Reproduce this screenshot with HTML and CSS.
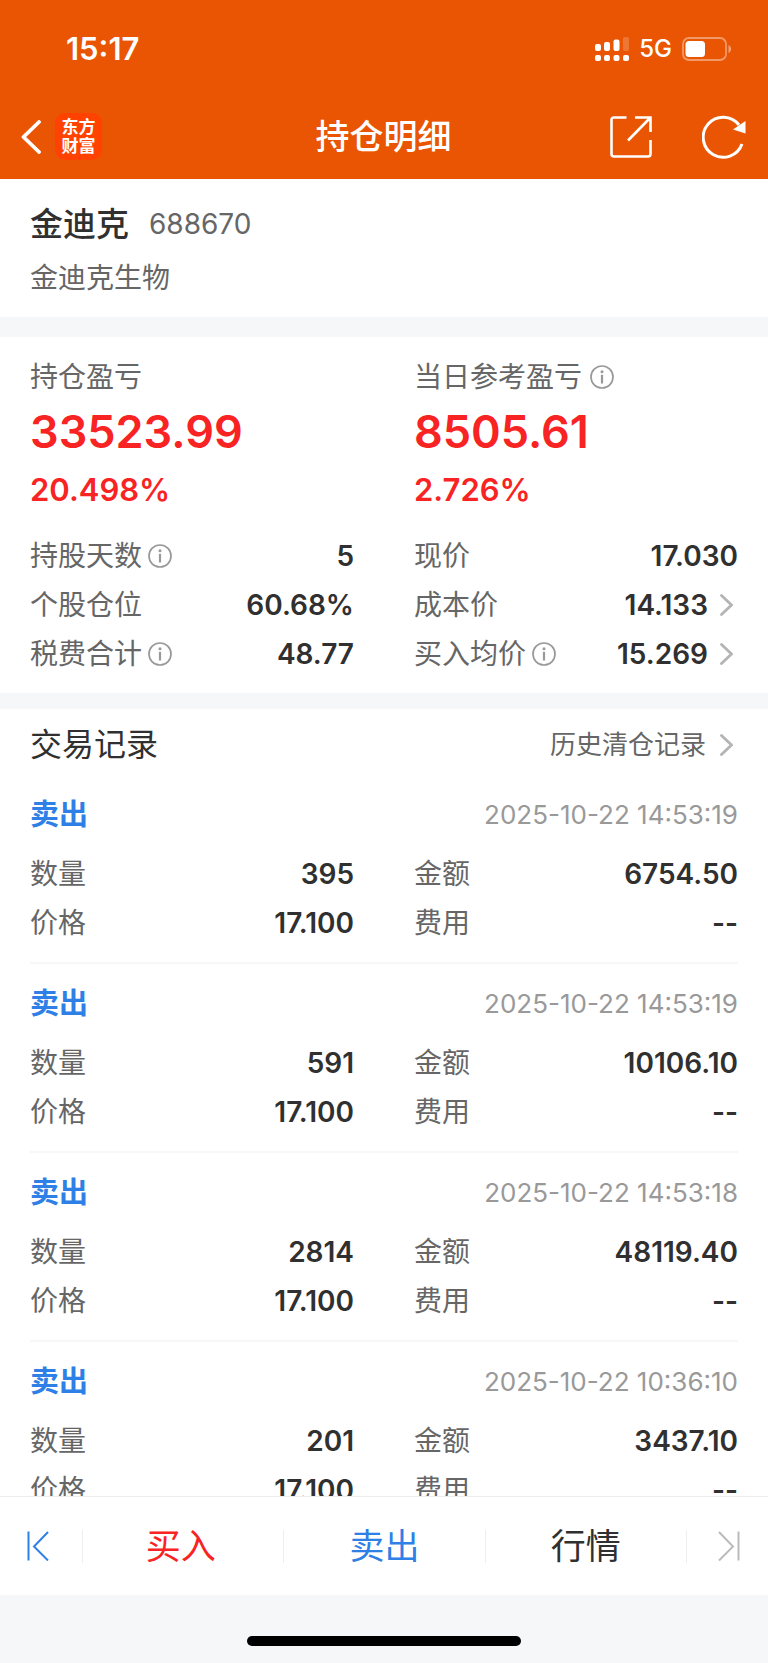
FILE: index.html
```html
<!DOCTYPE html>
<html lang="zh-CN">
<head>
<meta charset="utf-8">
<meta name="viewport" content="width=device-width, initial-scale=1">
<title>持仓明细</title>
<link rel="stylesheet" href="styles.css">
</head>
<body>
<svg class="sprite" aria-hidden="true">
  <symbol id="info" viewBox="0 0 24 24">
    <circle cx="12" cy="12" r="11" fill="none" stroke="currentColor" stroke-width="1.7"/>
    <circle cx="12" cy="6.8" r="1.5" fill="currentColor"/>
    <path d="M12 9.8V18.5" stroke="currentColor" stroke-width="2.2"/>
  </symbol>
  <symbol id="chevron" viewBox="0 0 13 22">
    <path d="M1.5 1.5L11.5 11L1.5 20.5" fill="none" stroke="currentColor" stroke-width="2.8" stroke-linecap="round"/>
  </symbol>
</svg>
<div class="app">
  <header class="header">
    <div class="status">
      <time class="clock">15:17</time>
      <svg class="signal" viewBox="0 0 34 25" aria-label="信号">
        <g fill="#fff">
          <rect x="0" y="7" width="6" height="7" rx="2"/><rect x="9" y="5" width="6" height="9" rx="2"/><rect x="18.500" y="2.500" width="6" height="11.500" rx="2"/>
          <rect x="0" y="18" width="6" height="6" rx="2"/><rect x="9" y="18" width="6" height="6" rx="2"/><rect x="18.500" y="18" width="6" height="6" rx="2"/><rect x="28" y="18" width="6" height="6" rx="2"/>
        </g>
        <rect x="28" y="0" width="6" height="14" rx="2" fill="#fff" opacity=".2"/>
      </svg>
      <span class="network">5G</span>
      <svg class="battery" viewBox="0 0 50 24" aria-label="电量">
        <rect x="1" y="1" width="43" height="22" rx="6" fill="none" stroke="#fff" stroke-opacity=".4" stroke-width="1.8"/>
        <rect x="3.500" y="4" width="19.500" height="16" rx="3.500" fill="#fff"/>
        <path d="M46.500 8V16C50 14.500 50 9.500 46.500 8Z" fill="#fff" opacity=".45"/>
      </svg>
    </div>
    <nav class="nav">
      <div class="nav-side">
        <button class="icon-button" type="button" aria-label="返回">
          <svg class="back" viewBox="0 0 20 34"><path d="M18 2L2.500 17L18 32" fill="none" stroke="#fff" stroke-width="3.800" stroke-linecap="round" stroke-linejoin="round"/></svg>
        </button>
        <div class="logo"><span>东方</span><span>财富</span></div>
      </div>
      <h1 class="title">持仓明细</h1>
      <div class="nav-side nav-end">
        <button class="icon-button" type="button" aria-label="分享">
          <svg class="share" viewBox="0 0 42 42" fill="none" stroke="#fff" stroke-width="2.600">
            <path d="M16.500 1.500H4Q1.500 1.500 1.500 4V38Q1.500 40.500 4 40.500H38Q40.500 40.500 40.500 38V24"/>
            <path d="M25 1.500H40.500V16M40 2L18 24.500"/>
          </svg>
        </button>
        <button class="icon-button" type="button" aria-label="刷新">
          <svg class="refresh" viewBox="0 0 44 44">
            <path d="M40 29A20 20 0 1 1 37 10" fill="none" stroke="#fff" stroke-width="3"/>
            <path d="M43.500 6V18.500L31 14.500Z" fill="#fff"/>
          </svg>
        </button>
      </div>
    </nav>
  </header>

  <main class="content">
    <section class="stock">
      <div class="stock-head"><h2 class="stock-name">金迪克</h2><span class="stock-code">688670</span></div>
      <p class="stock-full">金迪克生物</p>
    </section>

    <section class="holding">
      <div class="columns">
        <div>
          <p class="label">持仓盈亏</p>
          <p class="profit">33523.99</p>
          <p class="percent">20.498%</p>
        </div>
        <div>
          <p class="label">当日参考盈亏<svg class="info"><use href="#info"/></svg></p>
          <p class="profit">8505.61</p>
          <p class="percent">2.726%</p>
        </div>
      </div>
      <dl class="columns facts">
        <div class="row"><dt>持股天数<svg class="info"><use href="#info"/></svg></dt><dd>5</dd></div>
        <div class="row"><dt>现价</dt><dd>17.030</dd></div>
        <div class="row"><dt>个股仓位</dt><dd>60.68%</dd></div>
        <div class="row"><dt>成本价</dt><dd>14.133<svg class="chevron"><use href="#chevron"/></svg></dd></div>
        <div class="row"><dt>税费合计<svg class="info"><use href="#info"/></svg></dt><dd>48.77</dd></div>
        <div class="row"><dt>买入均价<svg class="info"><use href="#info"/></svg></dt><dd>15.269<svg class="chevron"><use href="#chevron"/></svg></dd></div>
      </dl>
    </section>

    <section class="trades">
      <div class="trades-head">
        <h2 class="trades-title">交易记录</h2>
        <a class="history" href="#">历史清仓记录<svg class="chevron"><use href="#chevron"/></svg></a>
      </div>
      <article class="trade">
        <div class="trade-head"><h3 class="side">卖出</h3><time class="date">2025-10-22 14:53:19</time></div>
        <dl class="columns">
          <div class="row"><dt>数量</dt><dd>395</dd></div><div class="row"><dt>金额</dt><dd>6754.50</dd></div>
          <div class="row"><dt>价格</dt><dd>17.100</dd></div><div class="row"><dt>费用</dt><dd>--</dd></div>
        </dl>
      </article>
      <article class="trade">
        <div class="trade-head"><h3 class="side">卖出</h3><time class="date">2025-10-22 14:53:19</time></div>
        <dl class="columns">
          <div class="row"><dt>数量</dt><dd>591</dd></div><div class="row"><dt>金额</dt><dd>10106.10</dd></div>
          <div class="row"><dt>价格</dt><dd>17.100</dd></div><div class="row"><dt>费用</dt><dd>--</dd></div>
        </dl>
      </article>
      <article class="trade">
        <div class="trade-head"><h3 class="side">卖出</h3><time class="date">2025-10-22 14:53:18</time></div>
        <dl class="columns">
          <div class="row"><dt>数量</dt><dd>2814</dd></div><div class="row"><dt>金额</dt><dd>48119.40</dd></div>
          <div class="row"><dt>价格</dt><dd>17.100</dd></div><div class="row"><dt>费用</dt><dd>--</dd></div>
        </dl>
      </article>
      <article class="trade">
        <div class="trade-head"><h3 class="side">卖出</h3><time class="date">2025-10-22 10:36:10</time></div>
        <dl class="columns">
          <div class="row"><dt>数量</dt><dd>201</dd></div><div class="row"><dt>金额</dt><dd>3437.10</dd></div>
          <div class="row"><dt>价格</dt><dd>17.100</dd></div><div class="row"><dt>费用</dt><dd>--</dd></div>
        </dl>
      </article>
    </section>
  </main>

  <footer>
    <div class="actions">
      <button class="action step first" type="button" aria-label="上一只"><svg class="step-icon" viewBox="0 0 22 30" fill="none" stroke="currentColor" stroke-width="2"><path d="M1.500 0.500V29.500M21 1L7 15.500L21 29.500"/></svg></button>
      <button class="action buy" type="button">买入</button>
      <button class="action sell" type="button">卖出</button>
      <button class="action quote" type="button">行情</button>
      <button class="action step last" type="button" aria-label="下一只"><svg class="step-icon" viewBox="0 0 22 30" fill="none" stroke="currentColor" stroke-width="2"><path d="M20.500 0.500V29.500M1 1L15 15.500L1 29.500"/></svg></button>
    </div>
    <div class="home"><div class="home-bar"></div></div>
  </footer>
</div>
</body>
</html>
```
FILE: styles.css
```css
* {
  box-sizing: border-box;
}

body,
h1,
h2,
h3,
p,
dl,
dd {
  margin: 0;
}

body {
  font-family: Inter, "Noto Sans CJK SC", sans-serif;
  font-size: 28px;
  line-height: 48px;
  color: #666;
  background: #f6f7f9;
}

button {
  padding: 0;
  border: 0;
  background: none;
  font: inherit;
  color: inherit;
}

svg {
  display: block;
  flex: none;
}

.sprite {
  display: none;
}

.app {
  display: flex;
  flex-direction: column;
  height: 100vh;
}

.header {
  flex: none;
  background: #ea5504;
  color: #fff;
}

.status {
  display: flex;
  align-items: center;
  height: 98px;
  padding: 0 36px 0 66px;
}

.clock {
  margin-right: auto;
  font-size: 31px;
  font-weight: 600;
}

.signal {
  width: 34px;
  height: 25px;
}

.network {
  margin: 0 10px;
  font-size: 24px;
  font-weight: 500;
}

.battery {
  width: 50px;
  height: 24px;
}

.nav {
  display: grid;
  grid-template-columns: 1fr auto 1fr;
  align-items: center;
  height: 81px;
  padding: 0 22px 4px 21px;
}

.nav-side {
  display: flex;
  align-items: center;
  gap: 14px;
}

.nav-end {
  justify-content: flex-end;
  gap: 50px;
}

.back {
  width: 20px;
  height: 34px;
}

.share {
  width: 42px;
  height: 42px;
}

.refresh {
  width: 44px;
  height: 44px;
}

.logo {
  display: flex;
  flex-direction: column;
  align-items: center;
  justify-content: center;
  width: 47px;
  height: 47px;
  border-radius: 10px;
  background: #ff4200;
  font-size: 17px;
  font-weight: 700;
  line-height: 19px;
}

.title {
  font-size: 34px;
  font-weight: 500;
}

.content {
  flex: 1;
  min-height: 0;
  overflow-y: auto;
  scrollbar-width: none;
}

.stock,
.holding,
.trades {
  padding: 0 30px;
  background: #fff;
}

.stock {
  padding-top: 19px;
  padding-bottom: 11px;
}

.stock-head {
  display: flex;
  align-items: center;
  gap: 20px;
  line-height: 52px;
}

.stock-name {
  font-size: 33px;
  font-weight: 500;
  color: #303030;
}

.stock-code {
  font-size: 28px;
}

.stock-full {
  line-height: 56px;
}

.holding {
  margin: 20px 0 16px;
  padding-top: 16px;
  padding-bottom: 15px;
}

.columns {
  display: grid;
  grid-template-columns: 1fr 1fr;
  column-gap: 60px;
}

.label {
  display: flex;
  align-items: center;
  gap: 8px;
}

.info {
  width: 24px;
  height: 24px;
  color: #999;
}

.profit {
  font-size: 45px;
  font-weight: 600;
  line-height: 62px;
  color: #f82323;
}

.percent {
  font-size: 31px;
  font-weight: 600;
  line-height: 54px;
  color: #f82323;
}

.facts {
  margin-top: 14px;
}

.row {
  display: flex;
  align-items: center;
  justify-content: space-between;
  height: 49px;
}

.row dt,
.row dd {
  display: flex;
  align-items: center;
}

.row dt {
  gap: 6px;
}

.row dd {
  gap: 12px;
  font-weight: 600;
  color: #303030;
}

.chevron {
  width: 13px;
  height: 22px;
  margin-right: 5px;
  color: #b4b4b4;
}

.trades-head {
  display: flex;
  align-items: center;
  justify-content: space-between;
  height: 66px;
  padding-top: 6px;
}

.trades-title {
  font-size: 32px;
  font-weight: 400;
  color: #303030;
}

.history {
  display: flex;
  align-items: center;
  gap: 14px;
  font-size: 26px;
  color: #666;
  text-decoration: none;
}

.trade {
  padding: 16px 0 15px;
  border-bottom: 2px solid #f6f7f9;
}

.trade-head {
  display: flex;
  align-items: center;
  justify-content: space-between;
  height: 48px;
  margin-bottom: 10px;
}

.side {
  font-size: 29px;
  font-weight: 700;
  color: #2e80e6;
}

.date {
  font-size: 26px;
  color: #999;
}

.actions {
  display: grid;
  grid-template-columns: 83px 1fr 1fr 1fr 81px;
  align-items: center;
  height: 99px;
  border-top: 1px solid #eee;
  background: #fff;
}

.action {
  display: flex;
  align-items: center;
  justify-content: center;
  height: 33px;
  border-right: 1px solid #eee;
  font-size: 35px;
}

.step-icon {
  width: 22px;
  height: 30px;
}

.first {
  justify-content: flex-start;
  padding-left: 27px;
  color: #2e80e6;
}

.last {
  justify-content: flex-end;
  padding-right: 28px;
  border-right: 0;
  color: #bbb;
}

.buy {
  padding-right: 5px;
  color: #f82323;
}

.sell {
  color: #2e80e6;
}

.quote {
  color: #303030;
}

.home {
  display: flex;
  justify-content: center;
  height: 68px;
  padding-top: 41px;
}

.home-bar {
  width: 274px;
  height: 10px;
  border-radius: 5px;
  background: #000;
}
```
